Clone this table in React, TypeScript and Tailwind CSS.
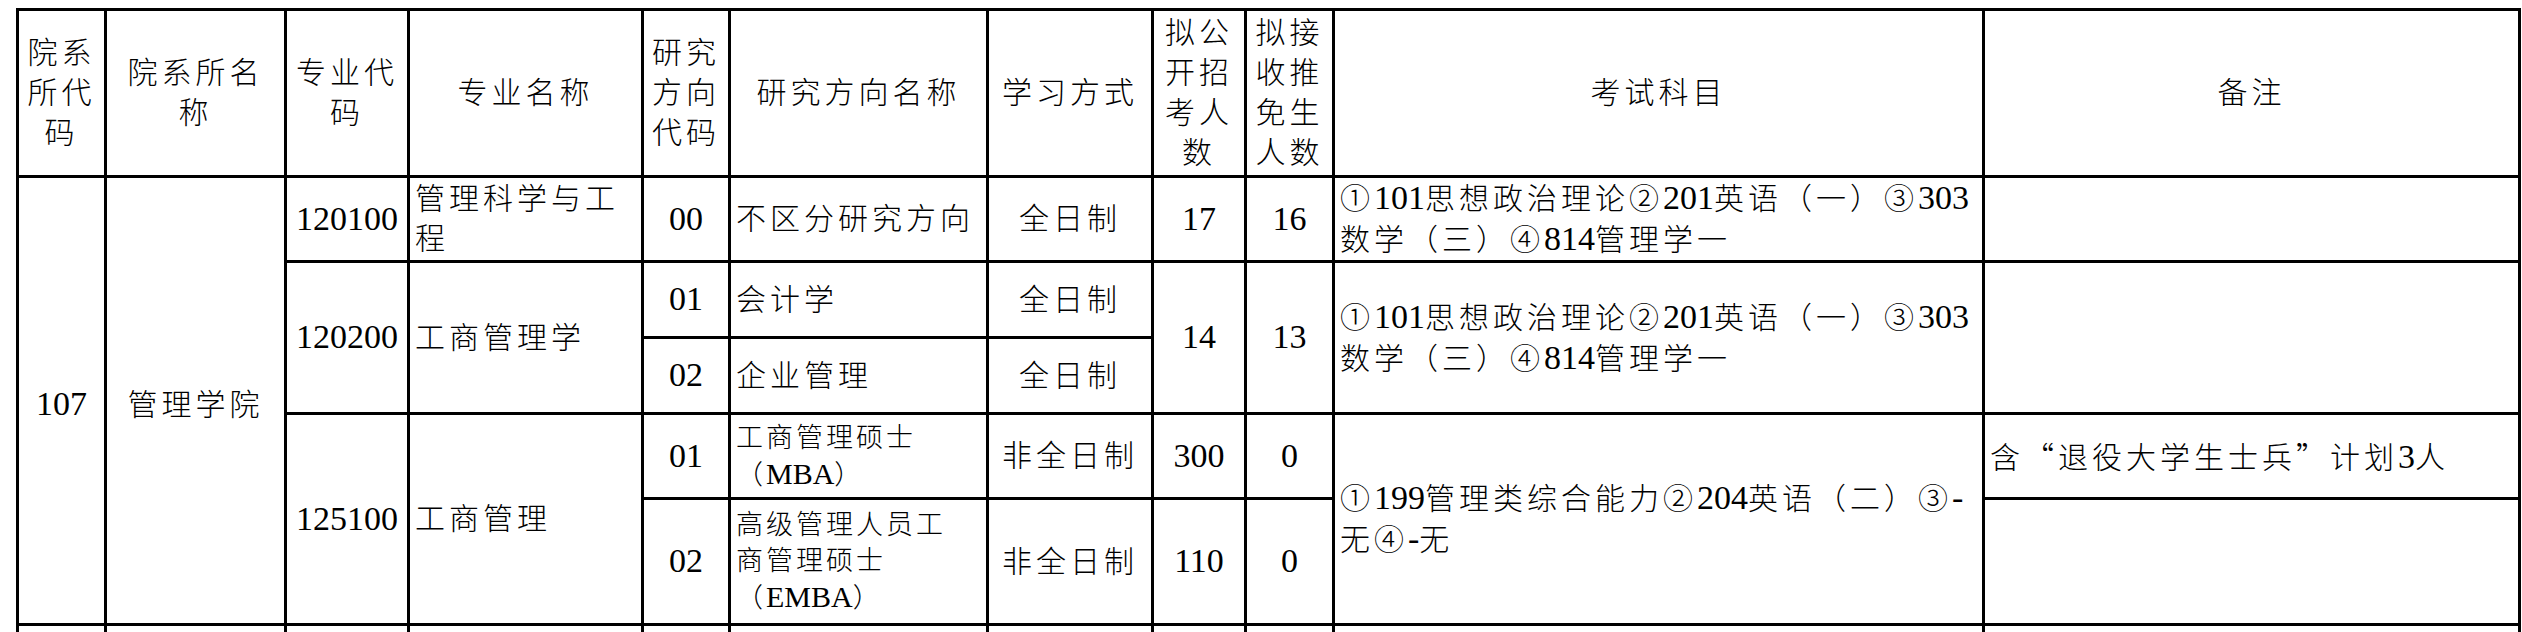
import React from 'react';

// Digits and latin runs use a slightly larger size without tracking so they stay narrow like the original
const rich = (s: string) =>
  s.split(/([0-9A-Za-z\-]+)/).map((part, i) =>
    /^[0-9A-Za-z\-]+$/.test(part) ? (
      <span key={i} className="text-[34px] tracking-normal">
        {part}
      </span>
    ) : (
      <React.Fragment key={i}>{part}</React.Fragment>
    )
  );

const cell = 'border-[3px] border-black align-middle';
const center = `${cell} text-center`;
const left = `${cell} text-left px-[5px]`;

const widths = [
  'w-[88px]',
  'w-[180px]',
  'w-[123px]',
  'w-[234px]',
  'w-[87px]',
  'w-[258px]',
  'w-[165px]',
  'w-[93px]',
  'w-[88px]',
  'w-[650px]',
  'w-[536px]',
];

const header = [
  '院系所代码',
  '院系所名称',
  '专业代码',
  '专业名称',
  '研究方向代码',
  '研究方向名称',
  '学习方式',
  '拟公开招考人数',
  '拟接收推免生人数',
  '考试科目',
  '备注',
];

const exam1 = '①101思想政治理论②201英语（一）③303数学（三）④814管理学一';
const exam2 = '①199管理类综合能力②204英语（二）③-无④-无';

export default function App() {
  return (
    <div className="h-[632px] w-[2522px] overflow-hidden bg-white pl-[16px] pt-[8px]">
      <table className="table-fixed border-collapse w-[2502px] text-black font-light font-['Liberation_Serif','Noto_Sans_CJK_SC',serif] text-[30px] tracking-[4px] leading-[40px]">
        <colgroup>
          {widths.map((w, i) => (
            <col key={i} className={w} />
          ))}
        </colgroup>
        <tbody>
          <tr className="h-[167px]">
            {header.map((h, i) => (
              <td key={i} className={`${center} px-[4px]`}>
                {h}
              </td>
            ))}
          </tr>

          <tr className="h-[85px]">
            <td rowSpan={5} className={`${center} pt-[8px]`}>
              {rich('107')}
            </td>
            <td rowSpan={5} className={`${center} pt-[8px]`}>
              管理学院
            </td>
            <td className={center}>{rich('120100')}</td>
            <td className={left}>管理科学与工程</td>
            <td className={center}>{rich('00')}</td>
            <td className={left}>不区分研究方向</td>
            <td className={center}>全日制</td>
            <td className={center}>{rich('17')}</td>
            <td className={center}>{rich('16')}</td>
            <td className={left}>{rich(exam1)}</td>
            <td className={left}></td>
          </tr>

          <tr className="h-[76px]">
            <td rowSpan={2} className={center}>
              {rich('120200')}
            </td>
            <td rowSpan={2} className={left}>
              工商管理学
            </td>
            <td className={center}>{rich('01')}</td>
            <td className={left}>会计学</td>
            <td className={center}>全日制</td>
            <td rowSpan={2} className={center}>
              {rich('14')}
            </td>
            <td rowSpan={2} className={center}>
              {rich('13')}
            </td>
            <td rowSpan={2} className={left}>
              {rich(exam1)}
            </td>
            <td rowSpan={2} className={left}></td>
          </tr>
          <tr className="h-[76px]">
            <td className={center}>{rich('02')}</td>
            <td className={left}>企业管理</td>
            <td className={center}>全日制</td>
          </tr>

          <tr className="h-[85px]">
            <td rowSpan={2} className={center}>
              {rich('125100')}
            </td>
            <td rowSpan={2} className={left}>
              工商管理
            </td>
            <td className={center}>{rich('01')}</td>
            <td className={`${left} text-[27px] leading-[36px] tracking-[3px]`}>
              工商管理硕士
              <br />
              （<span className="text-[30px] tracking-normal">MBA</span>）
            </td>
            <td className={center}>非全日制</td>
            <td className={center}>{rich('300')}</td>
            <td className={center}>{rich('0')}</td>
            <td rowSpan={2} className={left}>
              {rich(exam2)}
            </td>
            <td className={left}>
              含<span className="font-['Noto_Sans_CJK_SC',sans-serif]">“</span>退役大学生士兵
              <span className="font-['Noto_Sans_CJK_SC',sans-serif]">”</span>计划{rich('3')}人
            </td>
          </tr>
          <tr className="h-[126px]">
            <td className={center}>{rich('02')}</td>
            <td className={`${left} text-[27px] leading-[36px] tracking-[3px]`}>
              高级管理人员工
              <br />
              商管理硕士
              <br />
              （<span className="text-[30px] tracking-normal">EMBA</span>）
            </td>
            <td className={center}>非全日制</td>
            <td className={center}>{rich('110')}</td>
            <td className={center}>{rich('0')}</td>
            <td className={left}></td>
          </tr>

          <tr className="h-[40px]">
            {widths.map((_, i) => (
              <td key={i} className={cell}></td>
            ))}
          </tr>
        </tbody>
      </table>
    </div>
  );
}
